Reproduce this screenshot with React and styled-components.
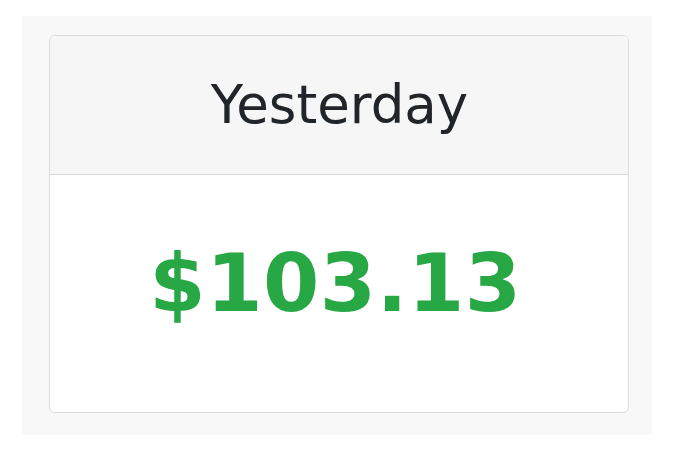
import React from 'react';
import styled, { createGlobalStyle } from 'styled-components';

const GlobalStyle = createGlobalStyle`
  html, body {
    margin: 0;
    padding: 0;
    background: #ffffff;
    font-family: "DejaVu Sans", Verdana, sans-serif;
  }
`;

const Page = styled.div`
  padding: 16px 27px 24px 22px;
`;

const Panel = styled.div`
  background: #f8f8f8;
  width: 630px;
  height: 419px;
  box-sizing: border-box;
  padding: 19px 23px 22px 27px;
`;

const Card = styled.div`
  display: flex;
  flex-direction: column;
  height: 100%;
  box-sizing: border-box;
  background: #ffffff;
  border: 1px solid #dcdcdc;
  border-radius: 6px;
  overflow: hidden;
`;

const Header = styled.div`
  height: 139px;
  box-sizing: border-box;
  display: flex;
  align-items: center;
  justify-content: center;
  background: #f6f6f6;
  border-bottom: 1px solid #d8d8d8;
  color: #212529;
  font-size: 53px;
  padding-bottom: 2px;
  padding-left: 1px;
`;

const Body = styled.div`
  flex: 1;
  display: flex;
  align-items: center;
  justify-content: center;
  padding-bottom: 22px;
  padding-right: 7px;
`;

const Amount = styled.div`
  color: ${p => p.color};
  font-weight: bold;
  font-size: 81px;
  letter-spacing: 0.5px;
`;

const App = () => (
  <Page>
    <GlobalStyle />
    <Panel>
      <Card>
        <Header>Yesterday</Header>
        <Body>
          <Amount color="#28a745">$103.13</Amount>
        </Body>
      </Card>
    </Panel>
  </Page>
);

export default App;
